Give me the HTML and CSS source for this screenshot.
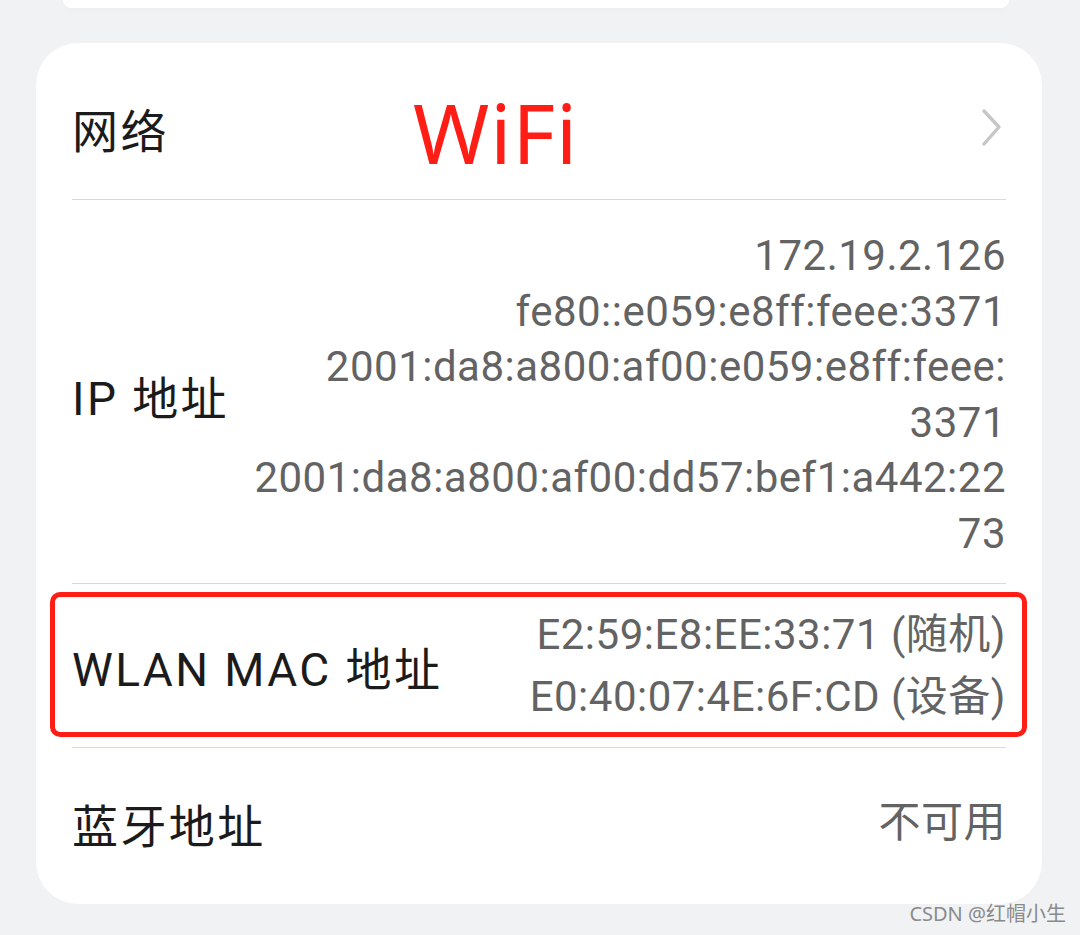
FILE: index.html
```html
<!DOCTYPE html>
<html lang="zh-CN">
<head>
<meta charset="utf-8">
<title>网络信息</title>
<link rel="stylesheet" href="styles.css">
</head>
<body>
<div class="prev-card"></div>
<div class="card">
  <div class="row row-net">
    <span class="label">网络</span>
    <span class="wifi">WiFi</span>
    <svg class="chev" width="24" height="40" viewBox="0 0 24 40"><path d="M4 3 L19 19 L4 36" fill="none" stroke="#c6c6c6" stroke-width="3.4" stroke-linecap="round" stroke-linejoin="round"/></svg>
  </div>
  <div class="row row-ip">
    <span class="label">IP 地址</span>
    <div class="value">
      <div>172.19.2.126</div>
      <div>fe80::e059:e8ff:feee:3371</div>
      <div>2001:da8:a800:af00:e059:e8ff:feee:</div>
      <div>3371</div>
      <div>2001:da8:a800:af00:dd57:bef1:a442:22</div>
      <div>73</div>
    </div>
  </div>
  <div class="row row-mac">
    <span class="label">WLAN MAC 地址</span>
    <div class="value">
      <div>E2:59:E8:EE:33:71 (随机)</div>
      <div>E0:40:07:4E:6F:CD (设备)</div>
    </div>
    <div class="highlight"></div>
  </div>
  <div class="row row-bt">
    <span class="label">蓝牙地址</span>
    <div class="value"><div>不可用</div></div>
  </div>
</div>
<div class="watermark">CSDN @红帽小生</div>
</body>
</html>
```
FILE: styles.css
```css
html, body {
  margin: 0;
  padding: 0;
}
body {
  background: #f1f2f4;
  width: 1080px;
  height: 935px;
  overflow: hidden;
  position: relative;
  font-family: Roboto, "Noto Sans CJK SC", sans-serif;
}
.prev-card {
  margin-left: 63px;
  width: 946px;
  height: 8px;
  background: #ffffff;
  border-radius: 0 0 14px 14px;
  box-shadow: 0 3px 6px rgba(0,0,0,0.02);
}
.card {
  margin-top: 35px;
  margin-left: 36px;
  width: 1006px;
  background: #ffffff;
  border-radius: 42px;
  padding: 0 36px 8px 36px;
  box-sizing: border-box;
}
.row {
  display: flex;
  align-items: center;
  justify-content: space-between;
  border-bottom: 1px solid #dadada;
  position: relative;
}
.row:last-child {
  border-bottom: none;
}
.label {
  font-family: Roboto, "Noto Sans CJK SC", sans-serif;
  font-size: 46px;
  color: #1b1b1b;
  font-weight: 400;
  white-space: nowrap;
  letter-spacing: 2.4px;
}
.row-net {
  height: 157px;
  padding-top: 14px;
  box-sizing: border-box;
}
.wifi {
  position: absolute;
  left: 341px;
  top: 48px;
  font-family: "Noto Sans", "Open Sans", sans-serif;
  font-size: 82px;
  line-height: 1;
  color: #ff1d15;
  letter-spacing: 1px;
}
.chev {
  display: block;
  margin-right: 2px;
}
.value {
  text-align: right;
  color: #636363;
  font-size: 42px;
  line-height: 55.6px;
  letter-spacing: 0.5px;
  font-family: Roboto, "Noto Sans CJK SC", sans-serif;
}
.row-ip {
  padding: 28px 0 21px;
}
.row-mac {
  padding: 20px 0 19px;
}
.row-mac .value {
  line-height: 62px;
}
.row-bt {
  height: 148px;
  padding-top: 2px;
  box-sizing: border-box;
}
.highlight {
  position: absolute;
  left: -22px;
  right: -21px;
  top: 8px;
  bottom: 10px;
  border: 5px solid #ff1d15;
  border-radius: 10px;
}
.watermark {
  position: absolute;
  right: 14px;
  bottom: 8px;
  font-family: "Noto Sans", "Noto Sans CJK SC", sans-serif;
  font-size: 20px;
  color: #8a8a8a;
}
```
